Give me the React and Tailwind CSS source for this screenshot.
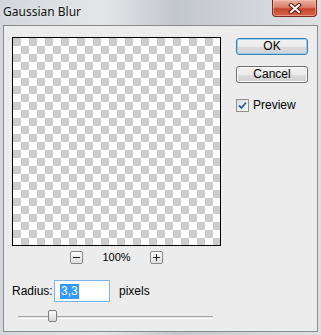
import React from "react";

// small square button under the preview (zoom out / zoom in)
const ZoomBtn = ({ plus }) => (
  <button className="w-[13px] h-[13px] rounded-[2px] border border-[#8a8a8a] bg-[linear-gradient(#fbfbfb,#dedede)] flex items-center justify-center p-0">
    <svg width="7" height="7" viewBox="0 0 7 7">
      <rect x="0" y="3" width="7" height="1" fill="#222" />
      {plus && <rect x="3" y="0" width="1" height="7" fill="#222" />}
    </svg>
  </button>
);

export default function App() {
  return (
    <div className="w-[321px] h-[335px] overflow-hidden flex flex-col bg-[linear-gradient(90deg,#d3d7dc_0%,#e3e6e9_32%,#c2c7cd_55%,#cfd3d8_75%,#dde0e3_100%)] font-['Liberation_Sans',Arial,sans-serif] text-[12px] text-black">
      {/* title bar */}
      <div className="h-[25px] shrink-0 flex justify-between items-start pr-[4px]">
        <span className="pl-[3px] pt-[4px] leading-[16px] text-[12px] font-['Noto_Sans',sans-serif] text-[#111] [text-shadow:0_0_5px_rgba(255,255,255,0.7)]">
          Gaussian Blur
        </span>
        <button className="w-[45px] h-[17px] rounded-b-[4px] border border-t-0 border-[#7a2a1e] bg-[linear-gradient(#eab0a2,#d9806a_45%,#c4452c_55%,#d6644a)] flex items-center justify-center shadow-[inset_0_0_0_1px_rgba(255,200,190,0.5)]">
          <svg width="14" height="11" viewBox="0 0 14 11">
            <path d="M3 2 L11 9 M11 2 L3 9" stroke="#5a1a12" strokeWidth="4" strokeLinecap="square" />
            <path d="M3 2 L11 9 M11 2 L3 9" stroke="#ffffff" strokeWidth="2" strokeLinecap="square" />
          </svg>
        </button>
      </div>

      {/* client area */}
      <div className="flex-1 mx-[3px] mb-[3px] border border-[#8b8b8b] bg-[#ececec] pl-[8px] pt-[11px] flex flex-col">
        <div className="flex">
          {/* preview */}
          <div className="w-[209px] flex flex-col items-center">
            <div className="w-[209px] h-[209px] border border-black bg-[conic-gradient(#ffffff_25%,#cccccc_0_50%,#ffffff_0_75%,#cccccc_0)] bg-[length:16px_16px]" />
            <div className="mt-[5px] h-[13px] flex items-center">
              <ZoomBtn />
              <span className="w-[67px] text-center text-[11px] leading-[13px]">100%</span>
              <ZoomBtn plus />
            </div>
          </div>

          {/* buttons */}
          <div className="ml-[15px] w-[72px] pt-[1px] flex flex-col">
            <button className="h-[17px] rounded-[3px] border border-[#3c7fb1] bg-[linear-gradient(#f2f2f2,#ebebeb_50%,#dddddd_51%,#d2d2d2)] shadow-[inset_0_0_0_1px_#8fd0f4] text-[12px] leading-[15px]">
              OK
            </button>
            <button className="mt-[11px] h-[17px] rounded-[3px] border border-[#707070] bg-[linear-gradient(#f2f2f2,#ebebeb_50%,#dddddd_51%,#cfcfcf)] shadow-[inset_0_0_0_1px_#fcfcfc] text-[12px] leading-[15px]">
              Cancel
            </button>
            <label className="mt-[15px] h-[14px] flex items-center gap-[4px]">
              <span className="w-[13px] h-[13px] border border-[#8e8f8f] bg-[linear-gradient(135deg,#dcdcdc,#fbfbfb)] flex items-center justify-center">
                <svg width="9" height="9" viewBox="0 0 9 9">
                  <path d="M1 4.5 L3.5 7 L8 1.5" fill="none" stroke="#2b5fa8" strokeWidth="1.8" />
                </svg>
              </span>
              <span className="leading-[14px]">Preview</span>
            </label>
          </div>
        </div>

        {/* radius */}
        <div className="mt-[16px] h-[22px] flex items-center">
          <span className="w-[42px]">Radius:</span>
          <div className="w-[56px] h-[22px] border border-[#7eb4ea] bg-white flex items-center pl-[5px]">
            <span className="bg-[#3399ff] text-white leading-[15px] px-[1px]">3,3</span>
          </div>
          <span className="ml-[9px]">pixels</span>
        </div>

        {/* slider */}
        <div className="mt-[8px] ml-[6px] w-[195px] h-[12px] relative">
          <div className="absolute left-0 right-0 top-[6px] h-[3px] border-t border-[#a3a3a3] border-b border-b-white bg-[#e6e6e6]" />
          <div className="absolute left-[30px] top-0 w-[9px] h-[12px] rounded-[2px] border border-[#7d7d7d] bg-[linear-gradient(#fdfdfd,#d6d6d6)]" />
        </div>
      </div>
    </div>
  );
}
